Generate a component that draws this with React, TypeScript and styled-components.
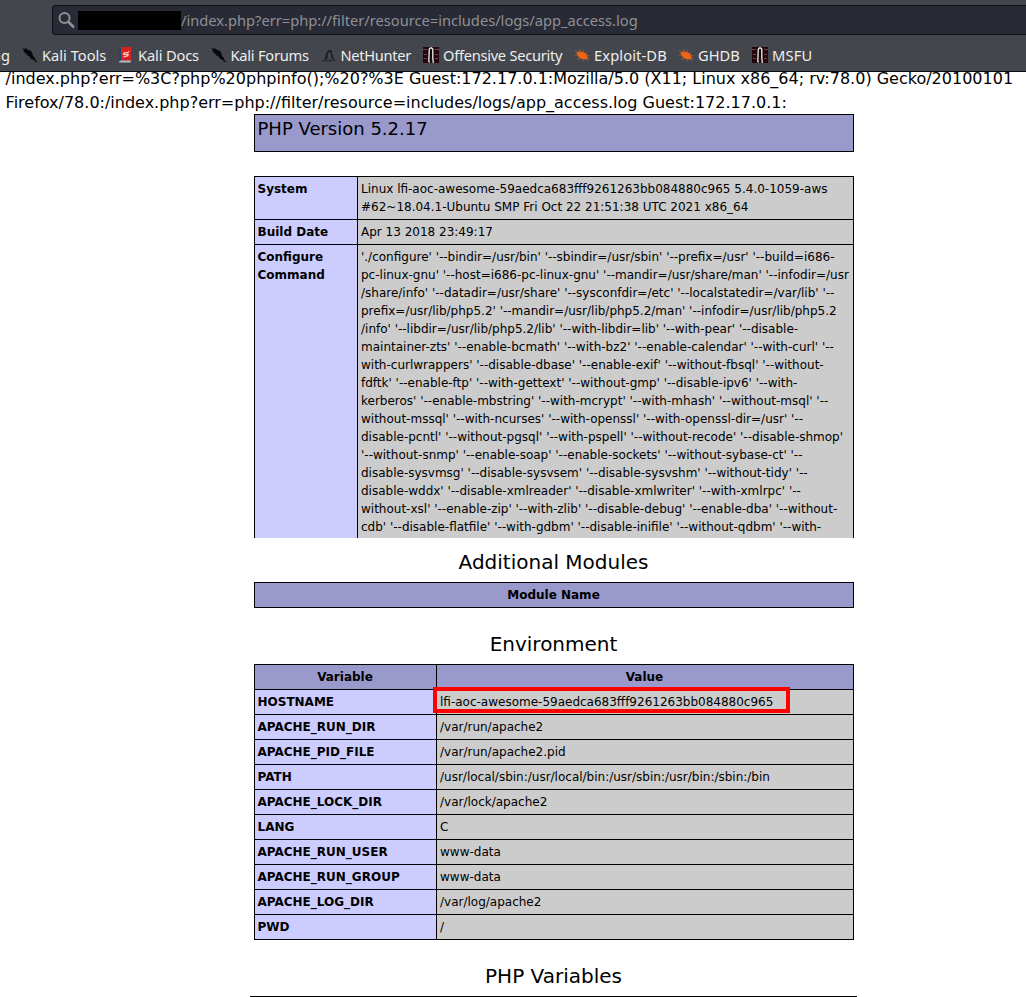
import React from "react";
import styled, { createGlobalStyle } from "styled-components";

const Global = createGlobalStyle`
  *, *::before, *::after { box-sizing: border-box; }
  html, body { margin: 0; padding: 0; background: #fff; }
  body { overflow: hidden; }
`;

const Page = styled.div`
  width: 1026px;
  height: 997px;
  overflow: hidden;
  background: #fff;
  color: #000;
  font-family: "DejaVu Sans", sans-serif;
`;

const Browser = styled.header`
  height: 72px;
  padding-top: 5px;
  background: #43464d;
  border-bottom: 1px solid #0c0c0d;
  font-family: "Noto Sans", sans-serif;
  overflow: hidden;
`;

const AddressBar = styled.div`
  display: flex;
  align-items: center;
  height: 30px;
  margin-left: 52px;
  padding-left: 5px;
  background: #282a36;
  border: 1px solid #0f1015;
  border-right: 0;
  border-radius: 4px 0 0 4px;
  font-size: 14.67px;
  color: #8f9094;
  white-space: pre;
`;

const Redacted = styled.span`
  width: 103px;
  height: 19px;
  margin-left: 3px;
  background: #000;
`;

const Bookmarks = styled.nav`
  display: flex;
  height: 36px;
  padding-top: 3px;
  align-items: center;
`;

const Bookmark = styled.span<{ $w: number; $tracking?: number; $clipped?: boolean }>`
  display: flex;
  align-items: center;
  flex: none;
  gap: 4px;
  width: ${(p) => p.$w}px;
  padding-right: ${(p) => (p.$clipped ? 12 : 0)}px;
  justify-content: ${(p) => (p.$clipped ? "flex-end" : "flex-start")};
  letter-spacing: ${(p) => p.$tracking ?? 0}px;
  font-size: 14.67px;
  line-height: 20px;
  color: #eeeeec;
  white-space: pre;
  svg { flex: none; }
`;

const Log = styled.div`
  height: 42px;
  padding-left: 5.6px;
  overflow: hidden;
  font-size: 16px;
  line-height: 24px;
  white-space: pre;
`;

const LogLine = styled.div`
  &:first-child { margin-top: -5px; }
`;

const Content = styled.main`
  width: 600px;
  margin-left: 254px;
  font-size: 12px;
  line-height: 18px;
`;

const Banner = styled.h1`
  height: 38px;
  margin: 0 0 24px;
  padding: 0 2.5px;
  border: 1px solid #000;
  background: #9999cc;
  font-size: 18px;
  font-weight: 400;
  line-height: 27px;
`;

const Grid = styled.div<{ $first: number; $h?: number }>`
  border: 1px solid #000;
  ${(p) => (p.$h ? `height: ${p.$h}px; border-bottom: 0; overflow: hidden;` : "")}
  display: grid;
  grid-template-columns: ${(p) => (p.$first ? `${p.$first}px 1fr` : "1fr")};
  grid-auto-rows: max-content;
  gap: 1px;
  background: #000;
`;

const Head = styled.div`
  padding: 3px 3.5px 3px 2.5px;
  background: #9999cc;
  font-weight: 700;
  text-align: center;
`;

const Key = styled.div`
  padding: 3px 3px 3px 2.5px;
  background: #ccccff;
  font-weight: 700;
  white-space: pre-line;
`;

const Value = styled.div`
  position: relative;
  padding: 3px;
  background: #cccccc;
  white-space: pre;
`;

const Highlight = styled.i`
  position: absolute;
  left: -4px;
  top: -3px;
  width: 357px;
  height: 26px;
  border: 4px solid #fe0000;
  z-index: 1;
`;

const Title = styled.h2<{ $top: number; $bottom: number }>`
  margin: ${(p) => p.$top}px 0 ${(p) => p.$bottom}px;
  padding-right: 1px;
  font-size: 20px;
  font-weight: 400;
  line-height: 30px;
  text-align: center;
`;

const Rule = styled.hr`
  height: 1px;
  width: 607px;
  margin: 0 0 0 -4px;
  border: 0;
  background: #000;
`;

const SearchIcon = () => (
  <svg width="17" height="18" viewBox="0 0 17 18" fill="none" stroke="#8f9094" strokeWidth="2">
    <circle cx="6.5" cy="7" r="5" />
    <path d="M10.2 10.8 16 16.5" strokeWidth="2.6" />
  </svg>
);

const DragonIcon = () => (
  <svg width="16" height="16" viewBox="0 0 16 16" fill="#08080a">
    <path d="M0 .5 2.5 2 3.5 1 5.500 2.500 9 4 10.500 6.500 11 9 13 11 13.5 13.5 16 15 13.5 15 11 12.500 9 12 7.500 9.500 5 8.5 5.500 7.300 3 6.5 3.500 5.5 1 4.700 2.200 3.8Z" />
  </svg>
);

const DocsIcon = () => (
  <svg width="16" height="16" viewBox="0 0 16 16">
    <path d="M3 0h10v13.500H3z" fill="#d9201c" />
    <path d="M1 1.500 3 0v13.500l-2 1.200z" fill="#174b77" />
    <path d="M1 14.500 3 13.500h10v1L12 15.500H1z" fill="#b9bcc4" />
    <path d="M10 5.200 6 6.200c-1 .5-.5 1.600.3 1.600L9.500 7c1 0 1 1.500 0 1.800L5.500 10M10 5.200l1.200-.6M6 7.500V5.500M9.500 9.500V7.500" fill="none" stroke="#f6dccc" strokeWidth="1.100" />
  </svg>
);

const HunterIcon = () => (
  <svg width="16" height="16" viewBox="0 0 16 16">
    <path d="M2 14.5C4.500 13 4 10 5 7c.7-2.500 2.400-4.500 4.200-4 2.300.5 1.700 3 2.300 5 .5 2.500 1.500 4 3.500 6-2.500-.5-4.500-2.500-5-5C9.600 7 10 5 8.500 5 6.500 5.500 7 9 6.500 11c-.5 2-2.500 3-4.500 3.500Z" fill="#1b1e23" />
    <path d="M0 14.500 4 12.200l3 1.200 3-1.200 5 2.300-4-.5-3 1-3-1Z" fill="#282b31" />
  </svg>
);

const OffsecIcon = () => (
  <svg width="16" height="16" viewBox="0 0 16 16">
    <path d="M0 0h16v16H0z" fill="#26080c" />
    <path d="M0 2.500h4M12 2.500h4M1 7.500h3M12 7.500h3M1 11.500h3M12 11.500h3" stroke="#66494b" strokeWidth="1" />
    <path d="M6 1.500h4V16H8.500V8h-1v8H6z" fill="#101010" />
    <path d="M6.500 15.500 5.800 14 6.300 2 7.500 1h1L9.800 2v9l.5 5" fill="none" stroke="#f1f1f1" strokeWidth="1.300" />
    <path d="M8 4v5" stroke="#080808" strokeWidth="1.400" />
  </svg>
);

const BugIcon = () => (
  <svg width="16" height="16" viewBox="0 0 16 16">
    <path d="M1 3.500 5 6M.5 8H4M3 12.500 6.500 11M5 2l2 3M9 2.500 9.500 5M13 5.500 11 7M16 9l-4-.5M15.500 13 12 11.500M9 14V12" stroke="#9b5637" strokeWidth="1" fill="none" />
    <path d="M3.500 5 6 4.500 8 5l2.500.5L13 8l.7 2.500-.5 2-2-.3-3-.2L5 10.500 3.500 8 2.500 6Z" fill="#ed6414" />
  </svg>
);

const bookmarks: [string, number, React.FC, number][] = [
  ["Kali Tools", 96, DragonIcon, 0],
  ["Kali Docs", 92.5, DocsIcon, -0.15],
  ["Kali Forums", 110, DragonIcon, -0.25],
  ["NetHunter", 102.5, HunterIcon, -0.3],
  ["Offensive Security", 151, OffsecIcon, -0.28],
  ["Exploit-DB", 104, BugIcon, 0.12],
  ["GHDB", 74, BugIcon, 0],
  ["MSFU", 80, OffsecIcon, 0.2],
];

const configure = `'./configure' '--bindir=/usr/bin' '--sbindir=/usr/sbin' '--prefix=/usr' '--build=i686-
pc-linux-gnu' '--host=i686-pc-linux-gnu' '--mandir=/usr/share/man' '--infodir=/usr
/share/info' '--datadir=/usr/share' '--sysconfdir=/etc' '--localstatedir=/var/lib' '--
prefix=/usr/lib/php5.2' '--mandir=/usr/lib/php5.2/man' '--infodir=/usr/lib/php5.2
/info' '--libdir=/usr/lib/php5.2/lib' '--with-libdir=lib' '--with-pear' '--disable-
maintainer-zts' '--enable-bcmath' '--with-bz2' '--enable-calendar' '--with-curl' '--
with-curlwrappers' '--disable-dbase' '--enable-exif' '--without-fbsql' '--without-
fdftk' '--enable-ftp' '--with-gettext' '--without-gmp' '--disable-ipv6' '--with-
kerberos' '--enable-mbstring' '--with-mcrypt' '--with-mhash' '--without-msql' '--
without-mssql' '--with-ncurses' '--with-openssl' '--with-openssl-dir=/usr' '--
disable-pcntl' '--without-pgsql' '--with-pspell' '--without-recode' '--disable-shmop'
'--without-snmp' '--enable-soap' '--enable-sockets' '--without-sybase-ct' '--
disable-sysvmsg' '--disable-sysvsem' '--disable-sysvshm' '--without-tidy' '--
disable-wddx' '--disable-xmlreader' '--disable-xmlwriter' '--with-xmlrpc' '--
without-xsl' '--enable-zip' '--with-zlib' '--disable-debug' '--enable-dba' '--without-
cdb' '--disable-flatfile' '--with-gdbm' '--disable-inifile' '--without-qdbm' '--with-`;

const info: [string, string][] = [
  ["System", "Linux lfi-aoc-awesome-59aedca683fff9261263bb084880c965 5.4.0-1059-aws\n#62~18.04.1-Ubuntu SMP Fri Oct 22 21:51:38 UTC 2021 x86_64"],
  ["Build Date", "Apr 13 2018 23:49:17"],
  ["Configure\nCommand", configure],
];

const environment: [string, string][] = [
  ["HOSTNAME", "lfi-aoc-awesome-59aedca683fff9261263bb084880c965"],
  ["APACHE_RUN_DIR", "/var/run/apache2"],
  ["APACHE_PID_FILE", "/var/run/apache2.pid"],
  ["PATH", "/usr/local/sbin:/usr/local/bin:/usr/sbin:/usr/bin:/sbin:/bin"],
  ["APACHE_LOCK_DIR", "/var/lock/apache2"],
  ["LANG", "C"],
  ["APACHE_RUN_USER", "www-data"],
  ["APACHE_RUN_GROUP", "www-data"],
  ["APACHE_LOG_DIR", "/var/log/apache2"],
  ["PWD", "/"],
];

export default function App() {
  return (
    <Page>
      <Global />
      <Browser>
        <AddressBar>
          <SearchIcon />
          <Redacted />
          <span>/index.php?err=php://filter/resource=includes/logs/app_access.log</span>
        </AddressBar>
        <Bookmarks>
          <Bookmark $w={22} $clipped>ng</Bookmark>
          {bookmarks.map(([label, w, Icon, tracking]) => (
            <Bookmark key={label} $w={w} $tracking={tracking}>
              <Icon />
              {label}
            </Bookmark>
          ))}
        </Bookmarks>
      </Browser>
      <Log>
        <LogLine>/index.php?err=%3C?php%20phpinfo();%20?%3E Guest:172.17.0.1:Mozilla/5.0 (X11; Linux x86_64; rv:78.0) Gecko/20100101</LogLine>
        <LogLine>Firefox/78.0:/index.php?err=php://filter/resource=includes/logs/app_access.log Guest:172.17.0.1:</LogLine>
      </Log>
      <Content>
        <Banner>PHP Version 5.2.17</Banner>
        <Grid $first={102} $h={362}>
          {info.map(([k, v]) => (
            <React.Fragment key={k}>
              <Key>{k}</Key>
              <Value>{v}</Value>
            </React.Fragment>
          ))}
        </Grid>
        <Title $top={9} $bottom={5}>Additional Modules</Title>
        <Grid $first={0}>
          <Head>Module Name</Head>
        </Grid>
        <Title $top={21} $bottom={5}>Environment</Title>
        <Grid $first={181}>
          <Head>Variable</Head>
          <Head>Value</Head>
          {environment.map(([k, v]) => (
            <React.Fragment key={k}>
              <Key>{k}</Key>
              <Value>
                {v}
                {k === "HOSTNAME" && <Highlight />}
              </Value>
            </React.Fragment>
          ))}
        </Grid>
        <Title $top={21} $bottom={5}>PHP Variables</Title>
        <Rule />
      </Content>
    </Page>
  );
}
